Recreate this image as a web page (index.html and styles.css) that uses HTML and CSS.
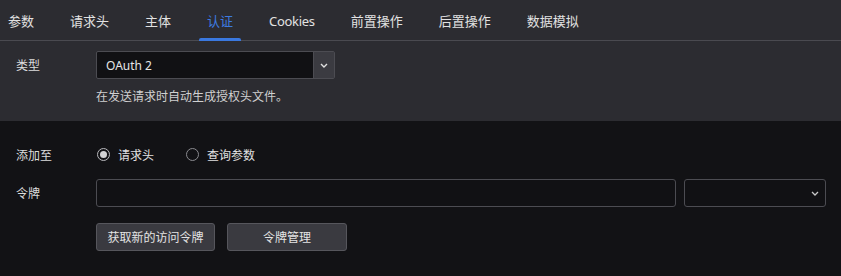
FILE: index.html
```html
<!DOCTYPE html>
<html lang="zh-CN">
<head>
<meta charset="utf-8">
<title>认证</title>
<link rel="stylesheet" href="styles.css">
</head>
<body>
<div class="app">
  <nav class="tabs">
    <div class="tab">参数</div>
    <div class="tab">请求头</div>
    <div class="tab">主体</div>
    <div class="tab active">认证</div>
    <div class="tab tab-latin">Cookies</div>
    <div class="tab">前置操作</div>
    <div class="tab">后置操作</div>
    <div class="tab">数据模拟</div>
  </nav>
  <section class="type-section">
    <div class="row">
      <div class="label">类型</div>
      <div class="select type-select">
        <span class="select-value">OAuth 2</span>
        <span class="select-btn">
          <svg width="8" height="5" viewBox="0 0 8 5"><path d="M1 1l3 3 3-3" fill="none" stroke="#e0e0e0" stroke-width="1.4"/></svg>
        </span>
      </div>
    </div>
    <div class="hint">在发送请求时自动生成授权头文件。</div>
  </section>
  <section class="body-section">
    <div class="row radio-row">
      <div class="label">添加至</div>
      <label class="radio checked"><span class="dot"></span>请求头</label>
      <label class="radio"><span class="dot"></span>查询参数</label>
    </div>
    <div class="row token-row">
      <div class="label">令牌</div>
      <div class="input"></div>
      <div class="select token-select">
        <svg width="8" height="5" viewBox="0 0 8 5"><path d="M1 1l3 3 3-3" fill="none" stroke="#c8c8c8" stroke-width="1.3"/></svg>
      </div>
    </div>
    <div class="row btn-row">
      <div class="label"></div>
      <button class="btn btn-get">获取新的访问令牌</button>
      <button class="btn btn-manage">令牌管理</button>
    </div>
  </section>
</div>
</body>
</html>
```
FILE: styles.css
```css
* { box-sizing: border-box; }
html, body {
  margin: 0;
  padding: 0;
  background: #121215;
  font-family: "Noto Sans", "Noto Sans CJK SC", sans-serif;
  color: #dcdcdc;
}
.app {
  width: 841px;
  height: 276px;
  display: flex;
  flex-direction: column;
  background: #121215;
}
.tabs {
  display: flex;
  gap: 20px;
  height: 41px;
  background: #2c2c31;
  border-bottom: 1px solid #4a4a50;
}
.tab {
  padding: 0 8px;
  height: 40px;
  line-height: 42px;
  font-size: 13px;
  color: #e2e2e2;
  position: relative;
  white-space: nowrap;
}
.tab-latin {
  letter-spacing: -0.3px;
}
.tab.active {
  color: #3d7be0;
}
.tab.active::after {
  content: "";
  position: absolute;
  left: 0;
  right: 0;
  bottom: -1px;
  height: 3px;
  background: #3a78df;
  border-radius: 2px 2px 0 0;
}
.type-section {
  background: #2c2c31;
  padding: 10px 0 16px;
}
.row {
  display: flex;
  align-items: center;
}
.label {
  width: 96px;
  padding-left: 16px;
  font-size: 12px;
  color: #dcdcdc;
  flex: none;
}
.select {
  display: flex;
  align-items: center;
  height: 28px;
  border: 1px solid #4c4c52;
  border-radius: 2px;
  background: #111114;
}
.type-select {
  width: 239px;
}
.select-value {
  flex: 1;
  padding-left: 9px;
  font-size: 12px;
  color: #e6e6e6;
}
.select-btn {
  width: 21px;
  height: 26px;
  background: #3b3b41;
  border-left: 1px solid #4c4c52;
  display: flex;
  align-items: center;
  justify-content: center;
}
.hint {
  margin-top: 10px;
  padding-left: 96px;
  font-size: 12px;
  line-height: 16px;
  color: #d0d0d0;
}
.body-section {
  flex: 1;
  padding-top: 23px;
  background: #121215;
}
.radio-row {
  height: 21px;
}
.radio {
  display: flex;
  align-items: center;
  font-size: 12px;
  color: #e0e0e0;
  margin-right: 31px;
  padding-left: 1px;
}
.dot {
  width: 13px;
  height: 13px;
  border-radius: 50%;
  border: 1px solid #8a8a8f;
  margin-right: 8px;
  display: flex;
  align-items: center;
  justify-content: center;
}
.radio.checked .dot {
  border-color: #b8b8bc;
}
.radio.checked .dot::after {
  content: "";
  width: 7px;
  height: 7px;
  border-radius: 50%;
  background: #d2d2d4;
}
.token-row {
  margin-top: 14px;
}
.input {
  width: 580px;
  height: 28px;
  border: 1px solid #4c4c52;
  border-radius: 3px;
  background: #111114;
}
.token-select {
  width: 142px;
  margin-left: 8px;
  border-radius: 3px;
  justify-content: flex-end;
  padding-right: 6px;
}
.btn-row {
  margin-top: 16px;
}
.btn {
  height: 28px;
  border: 1px solid #56565c;
  border-radius: 3px;
  background: #3a3a40;
  color: #e4e4e4;
  font-family: "Noto Sans", "Noto Sans CJK SC", sans-serif;
  font-size: 12px;
  padding: 0;
}
.btn-get {
  width: 119px;
}
.btn-manage {
  width: 120px;
  margin-left: 12px;
}
```
